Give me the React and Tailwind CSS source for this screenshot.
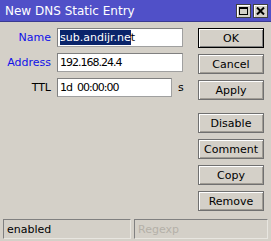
import React from "react";

const btn =
  "h-[20px] w-[66px] flex items-center justify-center border border-[#707070] bg-[#d4d0c8] shadow-[inset_1px_1px_0_#ffffff,inset_-1px_-1px_0_#a09c94] text-black";

function Btn({ children, def }) {
  return (
    <div className={def ? "h-[20px] w-[66px] flex items-center justify-center border border-black bg-[#d4d0c8] shadow-[inset_1px_1px_0_#ffffff,inset_-1px_-1px_0_#808080] text-black" : btn}>
      {children}
    </div>
  );
}

export default function App() {
  return (
    <div
      className="w-[271px] h-[241px] bg-[#d4d0c8] flex flex-col overflow-hidden text-[10.5px] leading-none"
      style={{ fontFamily: '"DejaVu Sans", sans-serif' }}
    >
      <div className="h-[22px] bg-[#5050c8] border-b border-[#3a3a90] flex items-center pl-[5px] pr-[3px] text-white text-[12px]">
        <span className="flex-1">New DNS Static Entry</span>
        <div className="flex gap-[2px]">
          <div className="w-[15px] h-[14px] bg-[#d4d0c8] border border-[#404040] shadow-[inset_1px_1px_0_#ffffff] flex items-center justify-center">
            <div className="w-[9px] h-[8px] border border-black border-t-2" />
          </div>
          <div className="w-[15px] h-[14px] bg-[#d4d0c8] border border-[#404040] shadow-[inset_1px_1px_0_#ffffff] flex items-center justify-center">
            <svg width="9" height="8" viewBox="0 0 9 8">
              <path d="M1 0.5 L8 7.5 M8 0.5 L1 7.5" stroke="#000" strokeWidth="2" />
            </svg>
          </div>
        </div>
      </div>
      <div className="flex flex-1 pt-[6px]">
        <div className="flex flex-col gap-[6px] w-[198px]">
          <div className="flex items-center h-[19px]">
            <span className="w-[51px] text-right text-[#1010e8] text-[11px]">Name</span>
            <div className="ml-[6px] w-[126px] h-[19px] bg-white border border-[#a0a0a0] border-t-[#808080] border-l-[#808080] flex items-center pl-[2px] text-[11px]">
              <span className="bg-[#0a246a] text-white py-[2px]">sub.andijr.ne</span>
              <span>t</span>
            </div>
          </div>
          <div className="flex items-center h-[19px]">
            <span className="w-[51px] text-right text-[#1010e8] text-[11px]">Address</span>
            <div className="ml-[6px] w-[126px] h-[19px] bg-white border border-[#a0a0a0] border-t-[#808080] border-l-[#808080] flex items-center pl-[2px] text-[11px] tracking-[-1px]">
              192.168.24.4
            </div>
          </div>
          <div className="flex items-center h-[19px]">
            <span className="w-[51px] text-right text-black text-[11px]">TTL</span>
            <div className="ml-[6px] w-[115px] h-[19px] bg-white border border-[#a0a0a0] border-t-[#808080] border-l-[#808080] flex items-center pl-[2px] text-[11px] tracking-[-1px]">
              <span>1d</span>
              <span className="ml-[5px]">00:00:00</span>
            </div>
            <span className="ml-[6px] text-[11px]">s</span>
          </div>
        </div>
        <div className="flex flex-col text-[11px]">
          <Btn def>OK</Btn>
          <div className="h-[6px]" />
          <Btn>Cancel</Btn>
          <div className="h-[6px]" />
          <Btn>Apply</Btn>
          <div className="h-[13px]" />
          <Btn>Disable</Btn>
          <div className="h-[6px]" />
          <Btn>Comment</Btn>
          <div className="h-[6px]" />
          <Btn>Copy</Btn>
          <div className="h-[6px]" />
          <Btn>Remove</Btn>
        </div>
      </div>
      <div className="flex gap-[3px] px-[3px] pb-[2px] h-[22px] text-[11px]">
        <div className="w-[128px] h-[20px] border border-[#808080] border-r-[#e8e6e0] border-b-[#e8e6e0] flex items-center pl-[3px] text-black">
          enabled
        </div>
        <div className="flex-1 h-[20px] border border-[#808080] border-r-[#e8e6e0] border-b-[#e8e6e0] flex items-center pl-[3px] text-[#b4b0a8]">
          Regexp
        </div>
      </div>
    </div>
  );
}
